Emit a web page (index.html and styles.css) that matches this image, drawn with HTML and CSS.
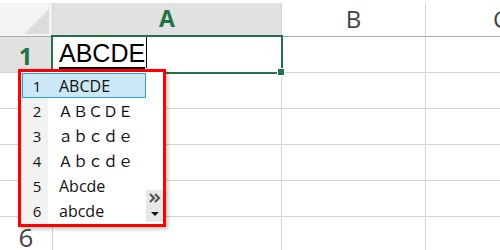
FILE: index.html
```
<!DOCTYPE html>
<html>
<head>
  <title>sheet</title>
  <link rel="stylesheet" href="styles.css">
</head>
<body>
  <div class="sheet">
    <div class="cell corner">
      <svg class="corner-mark" width="40" height="30" viewBox="0 0 40 30"><polygon points="37,3 37,28 12,28" fill="#dcdcdc"/></svg>
    </div>
    <div class="cell col-head active">A</div>
    <div class="cell col-head">B</div>
    <div class="cell col-head">C</div>

    <div class="cell row-head active">1</div>
    <div class="cell editing">
      <span class="typed">ABCDE</span><span class="caret"></span>
      <span class="handle"></span>
    </div>
    <div class="cell"></div>
    <div class="cell"></div>

    <!-- rows 2-5: headers sit under the candidate window -->
    <div class="cell row-head"></div><div class="cell"></div><div class="cell"></div><div class="cell"></div>
    <div class="cell row-head"></div><div class="cell"></div><div class="cell"></div><div class="cell"></div>
    <div class="cell row-head"></div><div class="cell"></div><div class="cell"></div><div class="cell"></div>
    <div class="cell row-head"></div><div class="cell"></div><div class="cell"></div><div class="cell"></div>
    <div class="cell row-head">6</div><div class="cell"></div><div class="cell"></div><div class="cell"></div>
  </div>

  <div class="candidates">
    <ul class="cand-list">
      <li class="cand selected"><span class="num">1</span><span class="word">ABCDE</span></li>
      <li class="cand"><span class="num">2</span><span class="word wide">ＡＢＣＤＥ</span></li>
      <li class="cand"><span class="num">3</span><span class="word wide">ａｂｃｄｅ</span></li>
      <li class="cand"><span class="num">4</span><span class="word wide">Ａｂｃｄｅ</span></li>
      <li class="cand"><span class="num">5</span><span class="word">Abcde</span></li>
      <li class="cand"><span class="num">6</span><span class="word">abcde</span></li>
    </ul>
    <div class="cand-side">
      <div class="side-btn">
        <svg width="12" height="10" viewBox="0 0 12 10"><path d="M1 1 L5 5 L1 9 M6 1 L10 5 L6 9" fill="none" stroke="#555" stroke-width="2.2"/></svg>
      </div>
      <div class="side-btn">
        <svg width="10" height="6" viewBox="0 0 10 6"><polygon points="1,1 9,1 5,5" fill="#111"/></svg>
      </div>
    </div>
  </div>
</body>
</html>
```

FILE: styles.css
```
body {
  margin: 0;
  background: #fff;
  font-family: "Open Sans", "Noto Sans", sans-serif;
  overflow: hidden;
}

.sheet {
  display: grid;
  grid-template-columns: 53px 229px 144px 150px;
  grid-template-rows: 34px repeat(6, 36px);
  padding-top: 3px;
}

.cell {
  box-sizing: border-box;
  border-right: 1px solid #d4d4d4;
  border-bottom: 1px solid #d4d4d4;
}

.corner {
  background: #f3f3f3;
  border-bottom-color: #ababab;
  display: flex;
  align-items: flex-end;
  justify-content: flex-end;
}

.corner-mark {
  display: block;
}

.col-head {
  border-bottom-color: #ababab;
  display: flex;
  align-items: center;
  justify-content: center;
  font-size: 24px;
  color: #444;
  padding-bottom: 2px;
}

.col-head.active {
  background: #e1e1e1;
  color: #217346;
  font-weight: 700;
  font-size: 23px;
  border-bottom: 2px solid #217346;
}

.row-head {
  display: flex;
  align-items: center;
  justify-content: center;
  font-size: 26px;
  color: #444;
  padding-top: 4px;
}

.row-head.active {
  background: #e1e1e1;
  color: #217346;
  font-weight: 700;
  font-size: 24px;
  padding-top: 2px;
  border-right: 2px solid #217346;
}

.editing {
  position: relative;
  display: flex;
  align-items: flex-end;
  padding: 0 0 3px 6px;
}

.editing::after {
  content: "";
  position: absolute;
  left: -2px;
  top: -2px;
  right: -2px;
  bottom: -2px;
  border: 2px solid #217346;
  pointer-events: none;
}

.typed {
  font-family: "Liberation Sans", Arial, sans-serif;
  font-size: 25px;
  line-height: 28px;
  color: #000;
  border-bottom: 2px solid #000;
}

.caret {
  width: 1px;
  height: 31px;
  background: #000;
  margin-left: 1px;
  align-self: flex-start;
}

.handle {
  position: absolute;
  right: -4px;
  bottom: -4px;
  width: 6px;
  height: 6px;
  background: #217346;
  border: 1px solid #fff;
  z-index: 2;
}

.candidates {
  position: absolute;
  left: 18px;
  top: 69px;
  width: 142px;
  height: 152px;
  border: 3px solid #ff0000;
  background: #fff;
  display: flex;
  box-shadow: 2px 2px 4px rgba(0, 0, 0, 0.25);
  z-index: 5;
}

.cand-list {
  list-style: none;
  margin: 0;
  padding: 1px 0 0 1px;
  width: 124px;
  background: linear-gradient(to right, #f2f2f2 27px, #fff 27px);
}

.cand {
  box-sizing: border-box;
  height: 25px;
  display: flex;
  align-items: center;
  border: 1px solid transparent;
  color: #111;
}

.cand.selected {
  background: #cce8f6;
  border-color: #26a0da;
}

.num {
  width: 26px;
  text-align: center;
  font-size: 15px;
  padding-left: 1px;
}

.word {
  padding-left: 9px;
  font-size: 16px;
  font-family: "Open Sans", "Noto Sans CJK JP", sans-serif;
}

.word.wide {
  padding-left: 8px;
  font-size: 15px;
  font-family: "Noto Sans CJK JP", sans-serif;
}

.cand-side {
  flex: 1;
  display: flex;
  flex-direction: column;
  justify-content: flex-end;
  padding-bottom: 2px;
}

.side-btn {
  height: 16px;
  background: #e8e8e8;
  display: flex;
  align-items: center;
  justify-content: center;
}
```
